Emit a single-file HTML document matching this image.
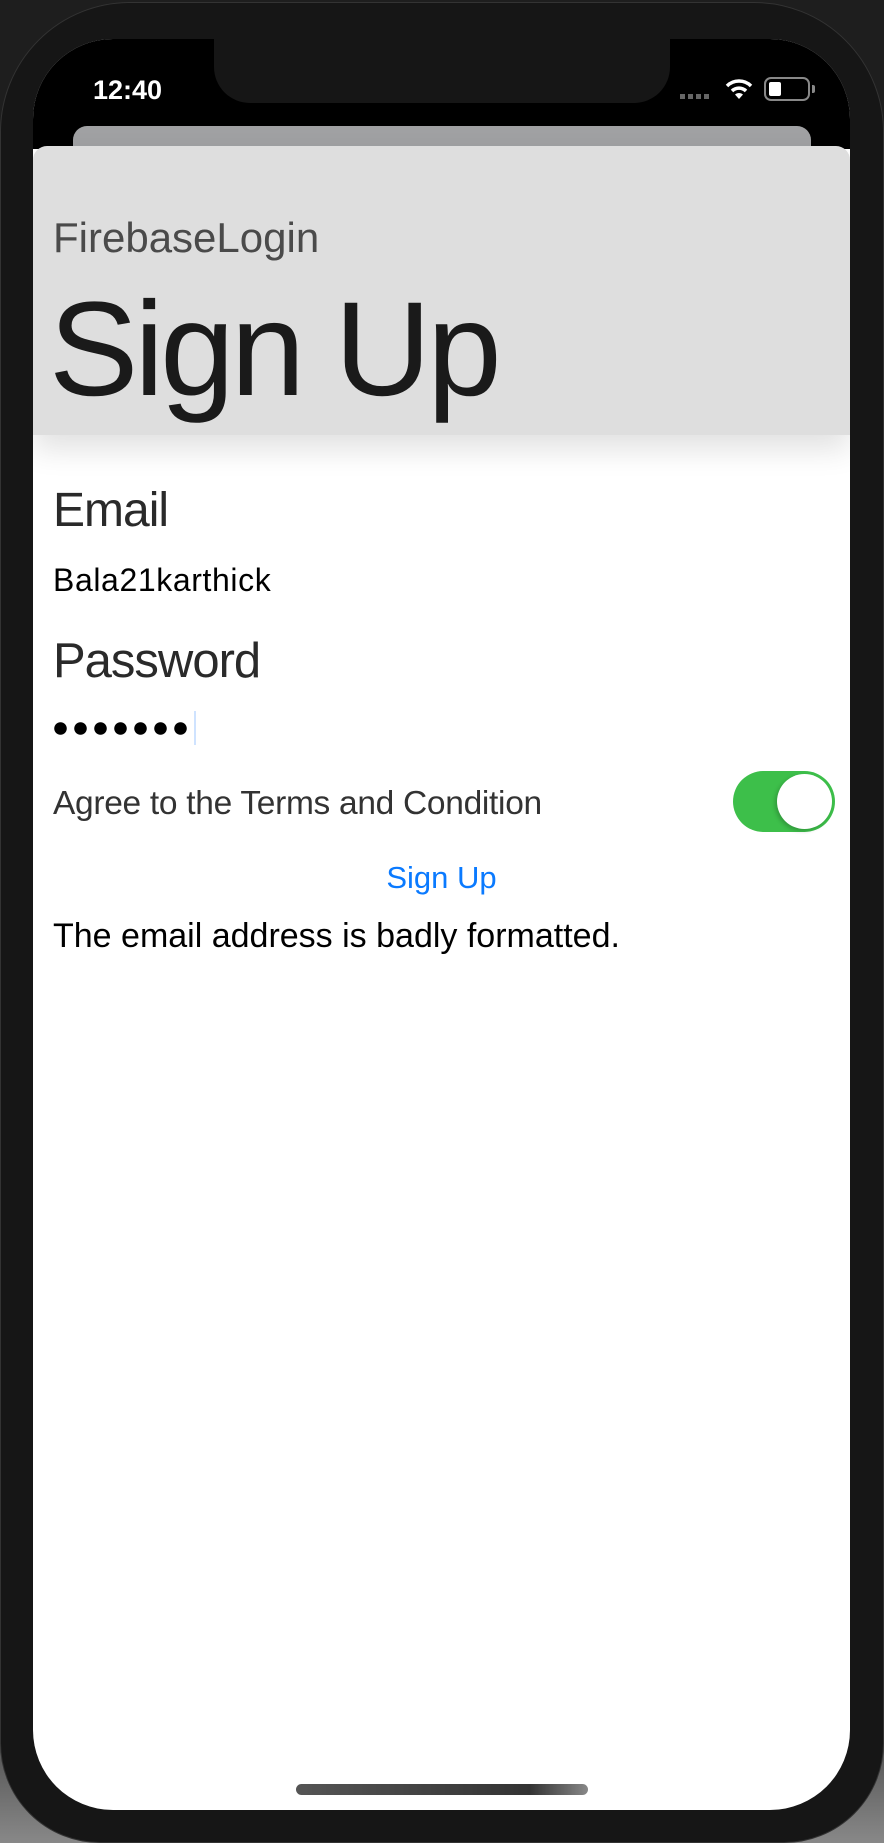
<!DOCTYPE html>
<html><head><meta charset="utf-8">
<style>
*{margin:0;padding:0;box-sizing:border-box}
html,body{width:884px;height:1843px;overflow:hidden;background:#1e1e1e;font-family:"Liberation Sans",sans-serif}
.bg{position:absolute;left:0;top:0;width:884px;height:1843px;background:linear-gradient(#1e1e1e 0,#1e1e1e 1640px,#888 1843px)}
.phone{position:absolute;left:0;top:2px;width:884px;height:1841px;background:#161616;border-radius:130px 130px 100px 100px;border:1px solid #333}
.screen{position:absolute;left:33px;top:39px;width:817px;height:1771px;background:#fff;border-radius:80px;overflow:hidden}
.black{position:absolute;left:0;top:0;width:817px;height:110px;background:#000}
.notch{position:absolute;left:181px;top:0;width:456px;height:64px;background:#161616;border-radius:0 0 36px 36px}
.t{position:absolute;white-space:nowrap;line-height:1}
</style></head><body>
<div class="bg"></div>
<div class="phone"></div>
<div class="screen">
  <div class="black"></div>
  <div class="notch"></div>
  <div class="t" style="left:60px;top:38px;font-size:27px;color:#fff;font-weight:bold">12:40</div>
  <div style="position:absolute;left:647px;top:55px;width:31px;height:5px;background:repeating-linear-gradient(90deg,#666 0 5px,transparent 5px 8px)"></div>
  <svg style="position:absolute;left:692px;top:38px" width="28" height="24" viewBox="0 0 28 24"><path d="M2 9 A17 17 0 0 1 26 9" stroke="#fff" stroke-width="3.5" fill="none"/><path d="M7 14 A10 10 0 0 1 21 14" stroke="#fff" stroke-width="3.5" fill="none"/><path d="M14 22 L10 17.5 A6 6 0 0 1 18 17.5 Z" fill="#fff"/></svg>
  <div style="position:absolute;left:731px;top:38px;width:46px;height:24px;border:2px solid #888;border-radius:7px"><div style="position:absolute;left:3px;top:3px;width:12px;height:14px;background:#fff;border-radius:2px"></div></div>
  <div style="position:absolute;left:779px;top:46px;width:3px;height:8px;background:#888;border-radius:0 2px 2px 0"></div>
  <div style="position:absolute;left:40px;top:87px;width:738px;height:40px;background:#a0a1a3;border-radius:14px"></div>
  <div style="position:absolute;left:0;top:107px;width:817px;height:289px;background:#dedede;border-radius:14px 14px 0 0;box-shadow:0 14px 30px rgba(0,0,0,0.12)"></div>
  <div class="t" style="left:20px;top:178px;font-size:42px;color:#4a4a4a">FirebaseLogin</div>
  <div class="t" style="left:16px;top:244px;font-size:134px;color:#1a1a1a;letter-spacing:-4px">Sign Up</div>
  <div class="t" style="left:20px;top:448px;font-size:48px;color:#2a2a2a;letter-spacing:-1px">Email</div>
  <div class="t" style="left:20px;top:525px;font-size:32px;color:#000;letter-spacing:0.6px">Bala21karthick</div>
  <div class="t" style="left:20px;top:598px;font-size:49px;color:#2a2a2a;letter-spacing:-1px">Password</div>
  <div style="position:absolute;left:21px;top:683px;width:140px;height:13px;background:radial-gradient(circle at 6.5px 6.5px,#000 6px,transparent 6.5px) 0 0/20px 13px repeat-x"></div>
  <div style="position:absolute;left:161px;top:672px;width:2px;height:34px;background:#cfe3ff"></div>
  <div class="t" style="left:20px;top:748px;font-size:33.5px;color:#333;letter-spacing:-0.3px">Agree to the Terms and Condition</div>
  <div style="position:absolute;left:700px;top:732px;width:102px;height:61px;background:#3dbf4a;border-radius:31px"><div style="position:absolute;right:3px;top:3px;width:55px;height:55px;background:#fff;border-radius:50%;box-shadow:-2px 2px 4px rgba(0,0,0,0.2)"></div></div>
  <div class="t" style="left:0;width:817px;text-align:center;top:823px;font-size:31px;color:#0a7aff">Sign Up</div>
  <div class="t" style="left:20px;top:880px;font-size:34px;color:#000">The email address is badly formatted.</div>
  <div style="position:absolute;left:263px;top:1745px;width:292px;height:11px;border-radius:6px;background:linear-gradient(90deg,#555,#333 80%,#888)"></div>
</div>
</body></html>
